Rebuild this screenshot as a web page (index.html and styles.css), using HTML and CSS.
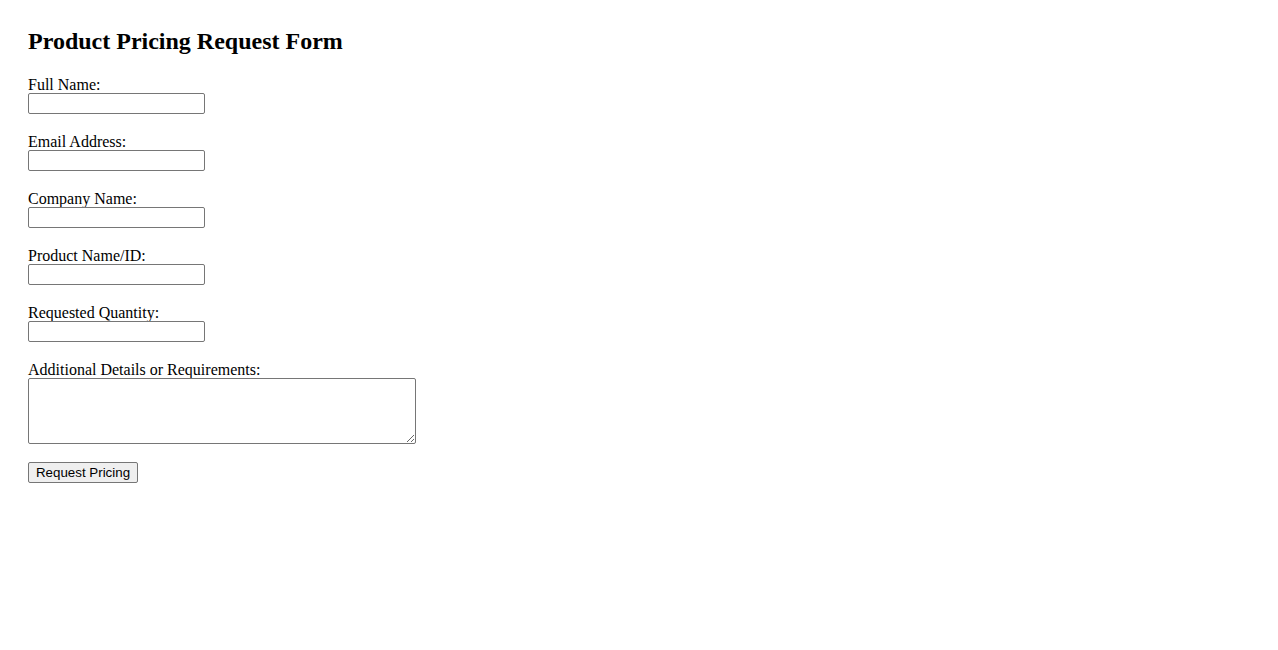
FILE: index.html
```html
<!DOCTYPE html>
<html lang="en">
<head>
<meta charset="utf-8">
<title>Product Pricing Request Form</title>
<link rel="stylesheet" href="styles.css">
</head>
<body>
<main class="page">
  <h2 class="title">Product Pricing Request Form</h2>
  <form class="form">
    <div class="field">
      <label class="label" for="name">Full Name:</label>
      <input class="input" type="text" id="name">
    </div>
    <div class="field">
      <label class="label" for="email">Email Address:</label>
      <input class="input" type="email" id="email">
    </div>
    <div class="field">
      <label class="label" for="company">Company Name:</label>
      <input class="input" type="text" id="company">
    </div>
    <div class="field">
      <label class="label" for="product">Product Name/ID:</label>
      <input class="input" type="text" id="product">
    </div>
    <div class="field">
      <label class="label" for="qty">Requested Quantity:</label>
      <input class="input" type="text" id="qty">
    </div>
    <div class="field">
      <label class="label" for="details">Additional Details or Requirements:</label>
      <textarea class="textarea" id="details"></textarea>
    </div>
    <div class="actions">
      <button class="button" type="submit">Request Pricing</button>
    </div>
  </form>
</main>
</body>
</html>
```

FILE: styles.css
```css
html, body {
  margin: 0;
  padding: 0;
  background: #ffffff;
}

body {
  font-family: "Liberation Serif", "Times New Roman", serif;
  font-size: 16px;
  color: #000000;
}

.page {
  padding: 28px;
}

.title {
  margin: 0 0 21px 0;
  font-size: 24px;
  line-height: 26px;
  font-weight: bold;
}

.form {
  display: flex;
  flex-direction: column;
  align-items: flex-start;
  gap: 18px;
}

.field {
  display: flex;
  flex-direction: column;
  align-items: flex-start;
}

.label {
  display: block;
  box-sizing: border-box;
  padding-top: 1px;
  line-height: 17px;
  height: 18px;
}

.input {
  box-sizing: border-box;
  width: 177px;
  height: 21px;
  margin: 0;
  padding: 1px 2px;
  border: 1px solid #767676;
  border-radius: 2px;
  font-family: "Liberation Sans", Arial, sans-serif;
  font-size: 13.33px;
  background: #ffffff;
}

.textarea {
  box-sizing: border-box;
  width: 388px;
  height: 66px;
  margin: 0;
  padding: 2px;
  border: 1px solid #767676;
  border-radius: 2px;
  font-family: "Liberation Mono", monospace;
  font-size: 13.33px;
  background: #ffffff;
}

.actions {
  display: flex;
}

.button {
  box-sizing: border-box;
  width: 110px;
  height: 21px;
  margin: 0;
  padding: 1px 6px;
  border: 1px solid #767676;
  border-radius: 2px;
  background: #efefef;
  color: #000000;
  font-family: "Liberation Sans", Arial, sans-serif;
  font-size: 13.33px;
  line-height: 17px;
}
```
